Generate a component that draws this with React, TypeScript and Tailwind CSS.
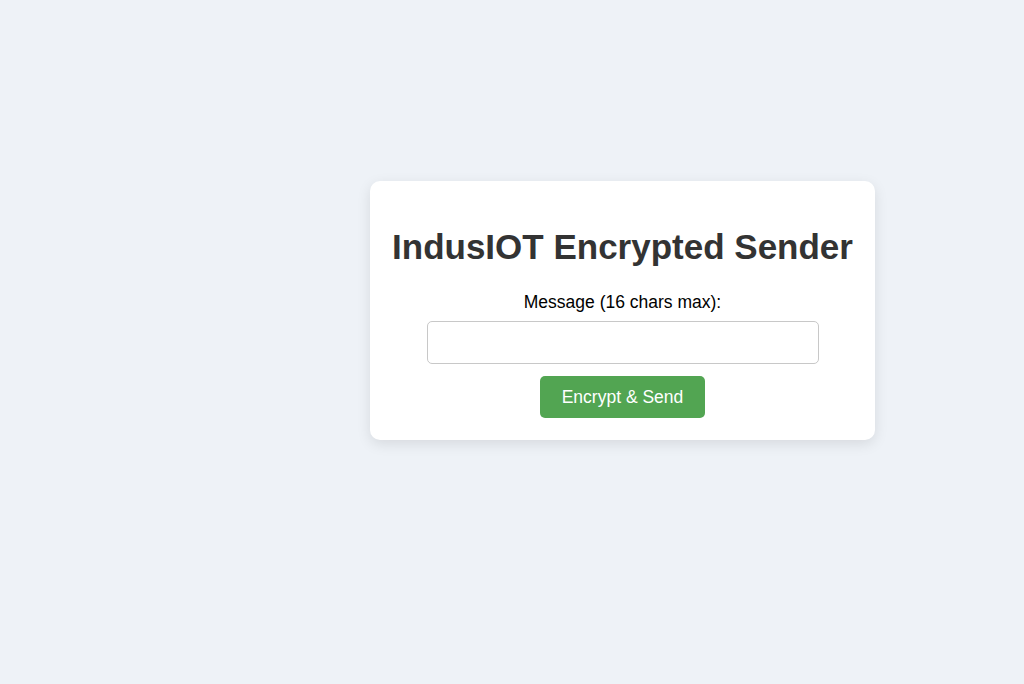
export default function App() {
    return (
        <div className="min-h-screen bg-[#eef2f7] pl-[370px] pt-[181px] font-['Liberation_Sans',Arial,sans-serif]">
            <div className="flex w-[505px] flex-col items-center rounded-[10px] bg-white px-[22px] pt-[46px] pb-[22px] shadow-[0_4px_14px_rgba(0,0,0,0.1)]">
                <h1 className="text-[35px] leading-[40px] font-bold whitespace-nowrap text-[#333333]">IndusIOT Encrypted Sender</h1>
                <label htmlFor="msg" className="mt-[25px] text-[17.5px] leading-[20px] text-black">
                    Message (16 chars max):
                </label>
                <input
                    id="msg"
                    type="text"
                    maxLength={16}
                    className="mt-[9px] h-[43px] w-[392px] rounded-[5px] border border-[#c8c8c8] bg-white px-3 text-[17.5px] outline-none"
                />
                <button className="mt-[12px] h-[42px] w-[165px] rounded-[5px] bg-[#52a552] text-[17.5px] leading-[20px] text-white">
                    Encrypt &amp; Send
                </button>
            </div>
        </div>
    );
}
